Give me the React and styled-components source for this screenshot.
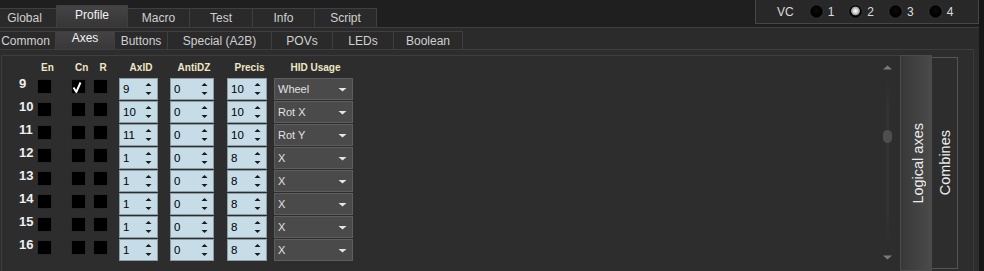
import React from 'react';
import styled, { createGlobalStyle } from 'styled-components';

const GlobalStyle = createGlobalStyle`
  html, body { margin: 0; padding: 0; background: #161616; }
  body { font-family: "Liberation Sans", Arial, sans-serif; }
  * { box-sizing: border-box; }
`;

const Root = styled.div`
  display: flex;
  width: 984px;
  height: 271px;
  overflow: hidden;
  background: #161616;
`;

const Main = styled.div`
  width: 979px;
  flex: 0 0 979px;
  display: flex;
  flex-direction: column;
  background: #2d2d2d;
`;

const TopBar = styled.div`
  height: 28px;
  flex: 0 0 28px;
  border-bottom: 1px solid #3e3e3e;
  background: #1f1f1f;
  display: flex;
  align-items: flex-end;
`;

const MainTab = styled.div`
  flex: 0 0 ${p => p.$w}px;
  margin-left: ${p => p.$ml || 0}px;
  margin-right: -1px;
  height: ${p => (p.$active ? 22 : 19)}px;
  border: 1px solid #3f3f3f;
  border-bottom: none;
  background: ${p => (p.$active ? 'linear-gradient(#444444, #363636)' : '#2a2a2a')};
  color: ${p => (p.$active ? '#f2f2f2' : '#d0d0d0')};
  font-size: 12px;
  display: flex;
  justify-content: center;
  align-items: center;
  padding-bottom: ${p => (p.$active ? 3 : 0)}px;
`;

const VCBox = styled.div`
  margin-left: auto;
  align-self: flex-start;
  width: 224px;
  height: 24px;
  border: 1px solid #464646;
  border-top: none;
  background: #282828;
  display: flex;
  align-items: center;
  padding-left: 21px;
  color: #dcdcdc;
  font-size: 12px;
`;

const VCLabel = styled.span`
  margin-right: 16px;
`;

const Option = styled.div`
  display: flex;
  align-items: center;
  gap: 5px;
  margin-right: 15px;
`;

const Radio = styled.span`
  width: 13px;
  height: 13px;
  border-radius: 50%;
  border: 1px solid #0c0c0c;
  background: ${p =>
    p.$checked
      ? 'radial-gradient(circle at 50% 45%, #ffffff 0, #dadada 2px, #9a9a9a 4px, #000 4.8px)'
      : 'radial-gradient(circle at 50% 40%, #0a0a0a 0, #000 6px)'};
  box-shadow: 0 0 0 0.5px #3a3a3a;
`;

const SubBar = styled.div`
  height: 21px;
  flex: 0 0 21px;
  background: #2b2b2b;
  display: flex;
  align-items: flex-end;
`;

const SubTab = styled.div`
  flex: 0 0 ${p => p.$w}px;
  margin-left: ${p => p.$ml || 0}px;
  margin-right: -1px;
  height: 18px;
  border: 1px solid #3f3f3f;
  border-bottom: none;
  background: ${p => (p.$active ? 'linear-gradient(#434343, #383838)' : '#2a2a2a')};
  color: ${p => (p.$active ? '#f2f2f2' : '#d0d0d0')};
  font-size: 12px;
  display: flex;
  justify-content: center;
  align-items: center;
  padding-bottom: ${p => (p.$active ? 5 : 0)}px;
`;

const Frame = styled.div`
  flex: 1;
  width: 974px;
  border-top: 1px solid #3e3e3e;
  border-right: 1px solid #3a3a3a;
  display: flex;
  align-items: flex-start;
  padding: 5px 0 0 1px;
`;

const ScrollPanel = styled.div`
  width: 899px;
  height: 218px;
  border: 1px solid #3e3e3e;
  border-right: none;
  border-bottom: none;
  display: flex;
`;

const Table = styled.div`
  flex: 1;
  display: grid;
  grid-template-columns: 35px 34px 22px 26px 51px 57px 47px 79px;
  grid-template-rows: 21px repeat(8, 22px);
  row-gap: 1px;
  align-content: start;
`;

const HeadCell = styled.div`
  width: ${p => p.$w}px;
  padding-left: 4px;
  text-align: center;
  align-self: center;
  font-size: 10px;
  font-weight: bold;
  color: #efe7c4;
  white-space: nowrap;
  padding-top: 2px;
`;

const Blank = styled.div``;

const RowLabel = styled.div`
  padding-left: 17px;
  font-size: 13px;
  font-weight: bold;
  color: #f0f0f0;
  line-height: 14px;
  margin-top: -1px;
`;

const Check = styled.div`
  width: 15px;
  height: 15px;
  margin-top: 1px;
  background: #000;
  border: 1px solid #2a2a2a;
`;

const SpinBox = styled.div`
  width: ${p => p.$w}px;
  height: 22px;
  background: #c6dce7;
  border: 1px solid #8e9ca4;
  display: flex;
  align-items: center;
  justify-content: space-between;
  padding: 0 5px 0 3px;
  font-size: 11.5px;
  color: #000;
`;

const Combo = styled.div`
  width: 79px;
  height: 22px;
  background: #4a4a4a;
  border: 1px solid #5e5e5e;
  display: flex;
  align-items: center;
  justify-content: space-between;
  padding: 0 5px 0 3px;
  font-size: 11px;
  color: #e2e2e2;
`;

const ScrollBar = styled.div`
  flex: 0 0 14px;
  margin-right: 6px;
  display: flex;
  flex-direction: column;
  align-items: center;
  padding: 9px 0 13px;
`;

const Track = styled.div`
  flex: 1;
  width: 3px;
  margin: 6px 0;
  background: linear-gradient(#2d2d2d, #323232 20%, #323232 80%, #2d2d2d);
  display: flex;
  flex-direction: column;
  align-items: center;
`;

const Thumb = styled.div`
  flex: 0 0 13px;
  width: 9px;
  margin-top: 54px;
  border-radius: 5px;
  background: #4e4e4e;
`;

const SideTab = styled.div`
  flex: 0 0 ${p => p.$w}px;
  height: ${p => p.$h}px;
  margin-top: ${p => p.$mt || 0}px;
  border: 1px solid ${p => (p.$active ? '#4a4a4a' : '#555555')};
  border-left: ${p => (p.$active ? '1px solid #4a4a4a' : 'none')};
  background: ${p => (p.$active ? 'linear-gradient(90deg, #383838, #4a4a4a)' : '#2d2d2d')};
  color: #ececec;
  font-size: 14.5px;
  display: flex;
  align-items: center;
  justify-content: center;
`;

const SideText = styled.span`
  writing-mode: vertical-rl;
  transform: rotate(180deg);
  white-space: nowrap;
  margin-left: ${p => p.$ml || 0}px;
`;

const SpinArrows = () => (
  <svg width="7" height="14" viewBox="0 0 7 14">
    <path d="M0.5 4 L3.5 1 L6.5 4 Z" fill="#1a1a1a" />
    <path d="M0.5 10 L3.5 13 L6.5 10 Z" fill="#1a1a1a" />
  </svg>
);

const ComboArrow = () => (
  <svg width="9" height="5" viewBox="0 0 9 5">
    <path d="M0.5 1 L8.5 1 L4.5 4.5 Z" fill="#e6e6e6" />
  </svg>
);

const CheckMark = () => (
  <svg width="13" height="13" viewBox="0 0 13 13" style={{ display: 'block' }}>
    <path d="M1.5 7.5 L4.3 12 L8.5 2.5" stroke="#ffffff" strokeWidth="1.9" fill="none" strokeLinejoin="round" />
  </svg>
);

const ScrollArrow = ({ down }) => (
  <svg width="9" height="5" viewBox="0 0 9 5">
    <path d={down ? 'M0 0.5 L9 0.5 L4.5 4.5 Z' : 'M0 4.5 L9 4.5 L4.5 0.5 Z'} fill="#7a7a7a" />
  </svg>
);

const rows = [
  [9, true, '9', '0', '10', 'Wheel'],
  [10, false, '10', '0', '10', 'Rot X'],
  [11, false, '11', '0', '10', 'Rot Y'],
  [12, false, '1', '0', '8', 'X'],
  [13, false, '1', '0', '8', 'X'],
  [14, false, '1', '0', '8', 'X'],
  [15, false, '1', '0', '8', 'X'],
  [16, false, '1', '0', '8', 'X'],
];

const mainTabs = [
  ['Global', 65, -8],
  ['Profile', 72],
  ['Macro', 63],
  ['Test', 64],
  ['Info', 63],
  ['Script', 63],
];

const subTabs = [
  ['Common', 61, -5],
  ['Axes', 60],
  ['Buttons', 54],
  ['Special (A2B)', 105],
  ['POVs', 62],
  ['LEDs', 62],
  ['Boolean', 70],
];

export default function App() {
  return (
    <>
      <GlobalStyle />
      <Root>
        <Main>
          <TopBar>
            {mainTabs.map(([t, w, ml]) => (
              <MainTab key={t} $w={w} $ml={ml} $active={t === 'Profile'}>{t}</MainTab>
            ))}
            <VCBox>
              <VCLabel>VC</VCLabel>
              {['1', '2', '3', '4'].map(n => (
                <Option key={n}>
                  <Radio $checked={n === '2'} />
                  <span>{n}</span>
                </Option>
              ))}
            </VCBox>
          </TopBar>
          <SubBar>
            {subTabs.map(([t, w, ml]) => (
              <SubTab key={t} $w={w} $ml={ml} $active={t === 'Axes'}>{t}</SubTab>
            ))}
          </SubBar>
          <Frame>
            <ScrollPanel>
              <Table>
                <Blank />
                <HeadCell $w={16}>En</HeadCell>
                <HeadCell $w={16}>Cn</HeadCell>
                <HeadCell $w={16}>R</HeadCell>
                <HeadCell $w={40}>AxID</HeadCell>
                <HeadCell $w={44}>AntiDZ</HeadCell>
                <HeadCell $w={41}>Precis</HeadCell>
                <HeadCell $w={79}>HID Usage</HeadCell>
                {rows.map(([n, cn, ax, dz, pr, hid]) => (
                  <React.Fragment key={n}>
                    <RowLabel>{n}</RowLabel>
                    <Check />
                    <Check>{cn && <CheckMark />}</Check>
                    <Check />
                    <SpinBox $w={39}><span>{ax}</span><SpinArrows /></SpinBox>
                    <SpinBox $w={44}><span>{dz}</span><SpinArrows /></SpinBox>
                    <SpinBox $w={40}><span>{pr}</span><SpinArrows /></SpinBox>
                    <Combo><span>{hid}</span><ComboArrow /></Combo>
                  </React.Fragment>
                ))}
              </Table>
              <ScrollBar>
                <ScrollArrow />
                <Track><Thumb /></Track>
                <ScrollArrow down />
              </ScrollBar>
            </ScrollPanel>
            <SideTab $active $w={32} $h={216}>
              <SideText $ml={3}>Logical axes</SideText>
            </SideTab>
            <SideTab $w={26} $h={212} $mt={2}>
              <SideText>Combines</SideText>
            </SideTab>
          </Frame>
        </Main>
      </Root>
    </>
  );
}
